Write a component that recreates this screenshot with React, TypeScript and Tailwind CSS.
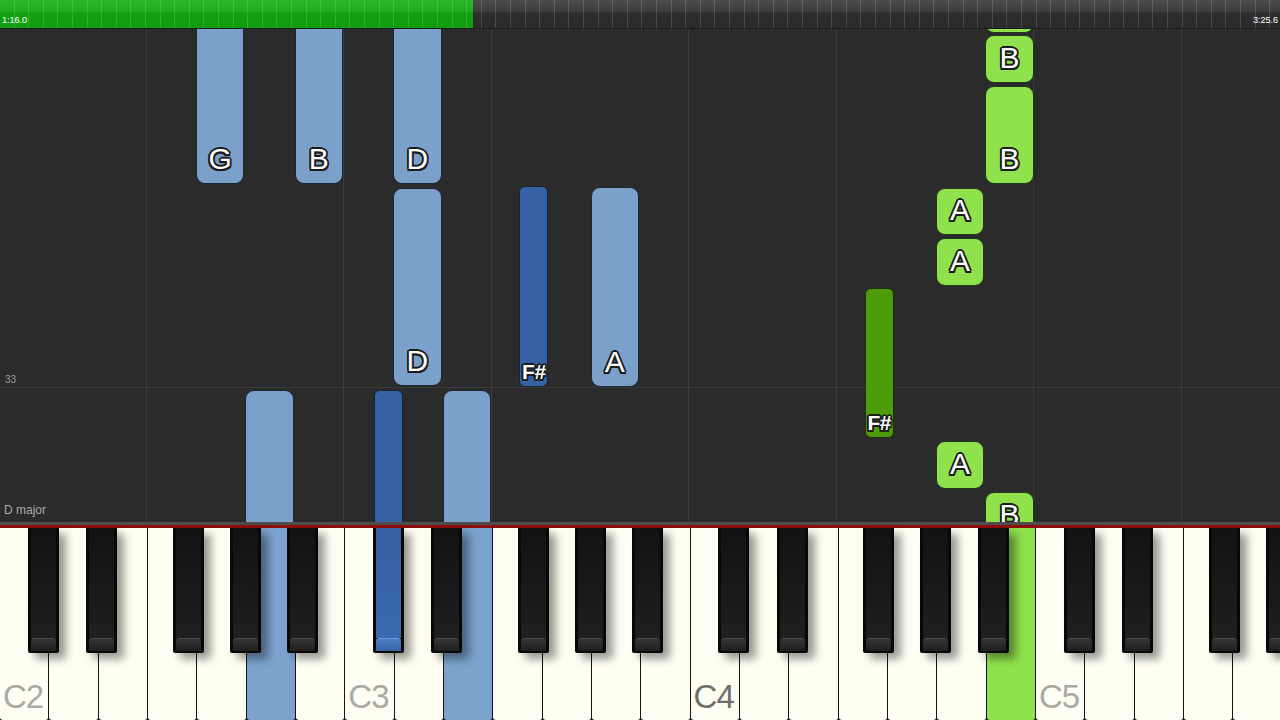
import React from 'react'

const W = 1036 / 21
const BLACK_OFFSETS = [27.5, 86, 172.5, 229.5, 287]
const LETTERS = ['C', 'D', 'E', 'F', 'G', 'A', 'B']
// widths of the C..F and F..C columns in the note lane
const COLUMNS = [3, 4, 3, 4, 3, 4, 3, 4, 2]
const TOP = 29

const NOTE_STYLE: Record<string, string> = {
  lb: 'bg-[#7ba1cb] border-[#1d2733]',
  db: 'bg-[#3561a5] border-[#172338]',
  lg: 'bg-[#8fe24c] border-[#22381a]',
  dg: 'bg-[#4e9c0c] border-[#1c3008]',
}

const LIT_WHITE: Record<number, string> = {
  5: 'bg-[#7ca3cd]',
  9: 'bg-[#7ca3cd]',
  20: 'bg-[#8fe24c]',
}

const notes = [
  { b: false, i: 4, top: -20, bot: 184, c: 'lb', l: 'G' },
  { b: false, i: 6, top: -20, bot: 184, c: 'lb', l: 'B' },
  { b: false, i: 8, top: -20, bot: 184, c: 'lb', l: 'D' },
  { b: false, i: 8, top: 188, bot: 386, c: 'lb', l: 'D' },
  { b: true, i: 7, top: 186, bot: 387, c: 'db', l: 'F#' },
  { b: false, i: 12, top: 187, bot: 387, c: 'lb', l: 'A' },
  { b: false, i: 5, top: 390, bot: 600, c: 'lb' },
  { b: true, i: 5, top: 390, bot: 600, c: 'db' },
  { b: false, i: 9, top: 390, bot: 600, c: 'lb' },
  { b: false, i: 20, top: -20, bot: 33, c: 'lg' },
  { b: false, i: 20, top: 35, bot: 83, c: 'lg', l: 'B' },
  { b: false, i: 20, top: 86, bot: 184, c: 'lg', l: 'B' },
  { b: false, i: 19, top: 188, bot: 235, c: 'lg', l: 'A' },
  { b: false, i: 19, top: 238, bot: 286, c: 'lg', l: 'A' },
  { b: true, i: 12, top: 288, bot: 438, c: 'dg', l: 'F#' },
  { b: false, i: 19, top: 441, bot: 489, c: 'lg', l: 'A' },
  { b: false, i: 20, top: 492, bot: 540, c: 'lg', l: 'B' },
]

const blackX = (idx: number) =>
  Math.floor(idx / 5) * 7 * W + BLACK_OFFSETS[idx % 5]

const outline =
  '[text-shadow:-1.5px_-1.5px_0_#1b1b1b,1.5px_-1.5px_0_#1b1b1b,-1.5px_1.5px_0_#1b1b1b,1.5px_1.5px_0_#1b1b1b,0_1.8px_0_#1b1b1b,0_-1.8px_0_#1b1b1b,1.8px_0_0_#1b1b1b,-1.8px_0_0_#1b1b1b]'

function Note({ n }: any) {
  const left = n.b ? blackX(n.i) + 1.5 : n.i * W - 1.5
  const width = n.b ? 29 : 48.5
  return (
    <div
      className={`absolute border flex flex-col justify-end items-center ${
        NOTE_STYLE[n.c]
      } ${n.b ? 'rounded-[6px] pb-[4px]' : 'rounded-[9px] pb-[9px]'}`}
      style={{ left, width, top: n.top - TOP, height: n.bot - n.top }}
    >
      {n.l && (
        <span
          className={`whitespace-nowrap leading-none text-white ${outline} ${
            n.b
              ? 'text-[21px] font-bold tracking-[-0.5px]'
              : 'text-[30px] h-[30px] flex items-center'
          }`}
        >
          {n.l}
        </span>
      )}
    </div>
  )
}

function BlackKey({ idx }: { idx: number }) {
  const lit = idx === 5
  return (
    <div
      className="absolute top-0 w-[31px] h-[125px] bg-[#080808] px-[3px] pb-[2px] flex flex-col rounded-b-[2px] shadow-[7px_6px_8px_rgba(0,0,0,0.4)]"
      style={{ left: blackX(idx) }}
    >
      <div
        className={`flex-1 ${
          lit
            ? 'bg-gradient-to-b from-[#3460a4] to-[#3b69ad]'
            : 'bg-gradient-to-b from-[#121212] to-[#1f1f1f]'
        }`}
      />
      <div
        className={`h-[13px] rounded-t-[3px] border-t ${
          lit
            ? 'border-[#6d97d4] bg-gradient-to-b from-[#4c7dc4] to-[#3563a8]'
            : 'border-[#4a4a4a] bg-gradient-to-b from-[#353535] to-[#1e1e1e]'
        }`}
      />
    </div>
  )
}

function ProgressBar() {
  return (
    <div className="grid h-[29px] shrink-0 border-b border-[#1c1c1c] bg-[linear-gradient(#4c4c4c,#3d3d3d_40%,#2f2f2f_45%,#2a2a2a)]">
      <div className="col-start-1 row-start-1 flex">
        <div className="w-[473px] bg-[linear-gradient(#2bb82b,#1fae1f_40%,#13a213_45%,#109c10)]" />
      </div>
      <div className="col-start-1 row-start-1 bg-[repeating-linear-gradient(90deg,transparent_0,transparent_13.6px,rgba(255,255,255,0.14)_13.6px,rgba(255,255,255,0.14)_14.6px)]" />
      <div className="col-start-1 row-start-1 flex items-end justify-between px-[2px] pb-[3px] text-[9px] leading-none text-white">
        <span>1:16.0</span>
        <span>3:25.6</span>
      </div>
    </div>
  )
}

function NoteLane() {
  return (
    <div className="grid h-[493px] shrink-0 overflow-hidden bg-[#2b2b2b]">
      {/* key-group columns */}
      <div className="col-start-1 row-start-1 flex -ml-[1.5px]">
        {COLUMNS.map((n, k) => (
          <div
            key={k}
            className={`shrink-0 h-full border-r border-[#3a3a3a] ${
              n === 3 ? 'w-[148px]' : n === 4 ? 'w-[197.333px]' : 'w-[98.667px]'
            }`}
          />
        ))}
      </div>
      {/* measure line and captions */}
      <div className="col-start-1 row-start-1 flex flex-col pt-[344px] pb-[5px] px-[4px]">
        <span className="text-[10px] leading-[14px] text-[#9a9a9a] pl-px">33</span>
        <div className="-mx-[4px] h-px bg-[#3a3a3a]" />
        <div className="flex-1" />
        <span className="text-[12px] leading-[14px] text-[#a8a8a8]">D major</span>
      </div>
      {/* notes */}
      <div className="col-start-1 row-start-1 relative">
        {notes.map((n, k) => (
          <Note key={k} n={n} />
        ))}
        <div className="absolute right-0 top-[408px] w-[4px] h-[42px] bg-[repeating-linear-gradient(#bbb_0,#bbb_1px,#666_1px,#666_2px)]" />
      </div>
    </div>
  )
}

function Keyboard() {
  const whites = Array.from({ length: 26 }, (_, i) => i)
  const blacks = Array.from({ length: 20 }, (_, i) => i).filter(
    (i) => blackX(i) < 1280
  )
  return (
    <div className="relative flex-1 flex bg-[#141414]">
      {whites.map((i) => {
        const letter = LETTERS[i % 7]
        const octave = 2 + Math.floor(i / 7)
        return (
          <div
            key={i}
            className={`w-[49.333px] shrink-0 h-full flex items-end px-[3px] pb-[7px] border-r-[1.5px] border-[#151515] rounded-b-[3px] ${
              LIT_WHITE[i] ?? 'bg-[#fefef2]'
            }`}
          >
            {letter === 'C' && (
              <span
                className={`text-[33px] leading-none tracking-[-1px] ${
                  octave === 4 ? 'text-[#6f6f68]' : 'text-[#aaaaa2]'
                }`}
              >
                C{octave}
              </span>
            )}
          </div>
        )
      })}
      {blacks.map((i) => (
        <BlackKey key={i} idx={i} />
      ))}
    </div>
  )
}

export default function App() {
  return (
    <div className="w-[1280px] h-[720px] overflow-hidden flex flex-col bg-[#2b2b2b] font-['Liberation_Sans',Arial,sans-serif]">
      <ProgressBar />
      <NoteLane />
      <div className="h-[3px] shrink-0 bg-[#4e4e4e]" />
      <div className="h-[3px] shrink-0 bg-[#8e0c0c]" />
      <Keyboard />
    </div>
  )
}
